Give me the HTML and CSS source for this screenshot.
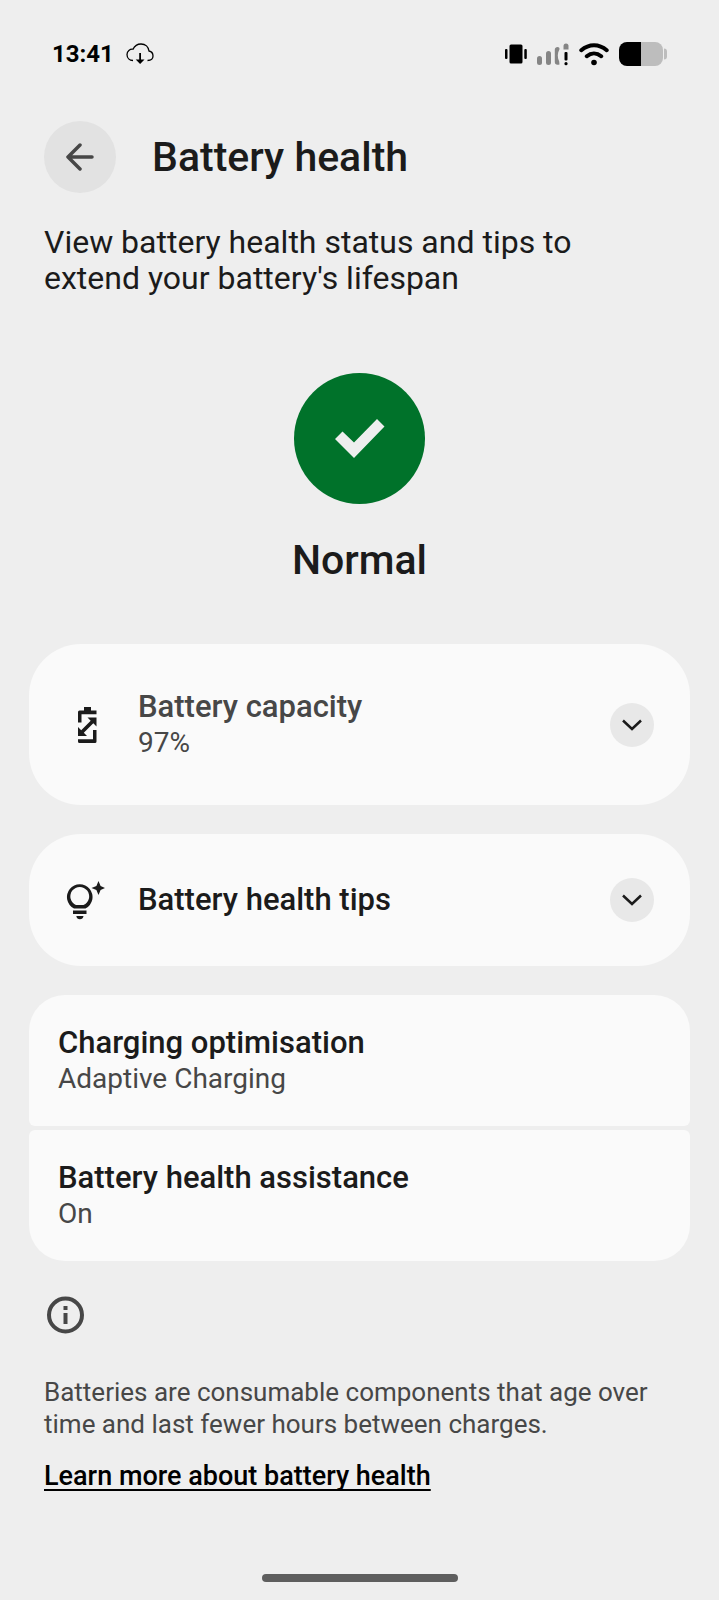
FILE: index.html
```
<!DOCTYPE html>
<html lang="en-GB">
<head>
    <meta charset="UTF-8">
    <meta name="viewport" content="width=device-width, initial-scale=1.0">
    <title>Battery health</title>
    <link rel="stylesheet" href="styles.css">
</head>
<body>

    <!-- Status bar -->
    <div class="status-bar">
        <div class="status-group">
            <span class="time">13:41</span>
            <svg class="cloud" width="28" height="22" viewBox="0 0 28 22" aria-hidden="true">
                <path d="M7 17.500C3.500 17.500 1 15 1 11.500S4 5.800 7 6.200C8.500 3 11.500 1 15 1c4.500 0 7.500 3 8 7 2.500.5 4 2.500 4 5 0 2.700-2 4.500-5.500 4.500" fill="none" stroke="#000" stroke-width="1.300"/>
                <path d="M13.200 10h1.800v6.500h3.500L14.100 21l-4.400-4.500h3.500z"/>
            </svg>
        </div>
        <div class="status-group status-icons">
            <svg width="22" height="24" viewBox="0 0 22 24" aria-hidden="true">
                <rect x="0" y="7" width="2.500" height="10" rx="1"/>
                <rect x="4.500" y="2.500" width="13" height="19" rx="1.500"/>
                <rect x="19.300" y="7" width="2.500" height="10" rx="1"/>
            </svg>
            <svg width="32" height="24" viewBox="0 0 32 24" aria-hidden="true">
                <g fill="#858585">
                    <rect x="0" y="14" width="5" height="9" rx="2.500"/>
                    <rect x="9" y="9" width="5" height="14" rx="2.500"/>
                    <path d="M20.500 5c1.300 0 2.200.8 2 2.200-2.200 3.800-2.200 8.300-.3 12.300l.3 3c-3 .8-4.700 0-4.700-2.500V7.500C17.800 6 19 5 20.500 5z"/>
                    <path d="M26.500 7.500V4a2.500 2.500 0 0 1 5 0v3.500z"/>
                </g>
                <rect x="27.500" y="10" width="3" height="8.500" rx="1"/>
                <circle cx="29" cy="21.700" r="1.600"/>
            </svg>
            <svg width="30" height="24" viewBox="0 0 30 24" aria-hidden="true">
                <path d="M2.300 8.200C10 1.500 20 1.500 27.700 8.200M7.800 14.200c4.300-3.700 10-3.700 14.400 0" fill="none" stroke="#000" stroke-width="4" stroke-linecap="round"/>
                <circle cx="15" cy="20.500" r="2.800"/>
            </svg>
            <svg width="48" height="24" viewBox="0 0 48 24" aria-hidden="true">
                <path d="M22 0h14a8 8 0 0 1 8 8v8a8 8 0 0 1-8 8H22z" fill="#bdbdbd"/>
                <path d="M22 0H8a8 8 0 0 0-8 8v8a8 8 0 0 0 8 8h14z"/>
                <path d="M45 6.500c2 0 3 1 3 3v5c0 2-1 3-3 3z" fill="#bdbdbd"/>
            </svg>
        </div>
    </div>

    <!-- Header -->
    <header class="header">
        <button type="button" class="back" aria-label="Back">
            <svg width="28" height="28" viewBox="0 0 28 28" fill="none" stroke="#474747" stroke-width="3.500" stroke-linecap="round" stroke-linejoin="round" aria-hidden="true">
                <path d="M26 14H2M14 2L2 14l12 12"/>
            </svg>
        </button>
        <h1>Battery health</h1>
    </header>

    <main>
        <p class="intro">View battery health status and tips to extend your battery's lifespan</p>

        <!-- Health status -->
        <section class="status">
            <div class="badge">
                <svg width="50" height="39" viewBox="0 0 50 39" aria-hidden="true">
                    <path d="M0 20l7.500-7.500L19 23.500 42 0l7.500 7.500L19 39z" fill="#eee"/>
                </svg>
            </div>
            <h2>Normal</h2>
        </section>

        <!-- Expandable cards -->
        <section class="card card-tall">
            <div class="card-icon">
                <svg width="40" height="40" viewBox="0 0 40 40" aria-hidden="true">
                    <path d="M13 17.500V7Q13 5.500 14.500 5.500H19V2h7v3.500h5.500V9.200H16.500v8.300z"/>
                    <path d="M22.500 12.500h9v9l-3.200-3.200-9.500 9.500L22 31h-9v-9l3.200 3.200 9.500-9.500z"/>
                    <path d="M31.500 25v11.500q0 1.500-1.500 1.500H14.500Q13 38 13 36.500v-2.200h15V25z"/>
                </svg>
            </div>
            <div class="card-text">
                <h3 class="muted">Battery capacity</h3>
                <p>97%</p>
            </div>
            <button type="button" class="expand" aria-label="Expand battery capacity">
                <svg width="20" height="12" viewBox="0 0 20 12" aria-hidden="true">
                    <path d="M1 1.500l9 8.500 9-8.500"/>
                </svg>
            </button>
        </section>

        <section class="card">
            <div class="card-icon">
                <svg width="40" height="40" viewBox="0 0 40 40" aria-hidden="true">
                    <path d="M9 28.500a12.800 12.800 0 1 1 11.500 0z"/>
                    <path class="bulb-hole" d="M11 25a9.400 9.400 0 1 1 7.500 0z"/>
                    <path d="M8 30.500h13.500v3.500H8zM11.300 36h7.200q-.6 3.200-3.600 3.200T11.300 36z"/>
                    <path d="M33.500 1l2.100 5.100L40 8l-4.400 1.900L33.500 15l-2.100-5.100L26.500 8l4.900-1.900z"/>
                </svg>
            </div>
            <div class="card-text">
                <h3>Battery health tips</h3>
            </div>
            <button type="button" class="expand" aria-label="Expand battery health tips">
                <svg width="20" height="12" viewBox="0 0 20 12" aria-hidden="true">
                    <path d="M1 1.500l9 8.500 9-8.500"/>
                </svg>
            </button>
        </section>

        <!-- Settings list -->
        <nav class="settings">
            <a href="#charging" class="setting">
                <h3>Charging optimisation</h3>
                <p>Adaptive Charging</p>
            </a>
            <a href="#assistance" class="setting">
                <h3>Battery health assistance</h3>
                <p>On</p>
            </a>
        </nav>
    </main>

    <!-- Footer note -->
    <footer class="note">
        <svg width="44" height="44" viewBox="0 0 44 44" aria-hidden="true">
            <circle cx="21.500" cy="22" r="16.500" fill="none" stroke="#474747" stroke-width="4"/>
            <path d="M19.500 20h4v11h-4zM19.500 13h4v4h-4z" fill="#474747"/>
        </svg>
        <p>Batteries are consumable components that age over time and last fewer hours between charges.</p>
        <a href="#learn-more">Learn more about battery health</a>
    </footer>

    <div class="home-bar"></div>

</body>
</html>
```
FILE: styles.css
```
* {
    margin: 0;
    padding: 0;
    box-sizing: border-box;
}

body {
    min-height: 100vh;
    display: flex;
    flex-direction: column;
    font-family: Roboto, sans-serif;
    background-color: #eee;
    color: #1b1b1b;
}

svg {
    display: block;
}

button {
    border: none;
    border-radius: 50%;
    display: flex;
    align-items: center;
    justify-content: center;
    flex-shrink: 0;
    cursor: pointer;
}

/* Status bar */
.status-bar {
    display: flex;
    justify-content: space-between;
    padding: 36px 52px 0;
}

.status-group {
    display: flex;
    align-items: center;
    gap: 12px;
    height: 36px;
    color: #000;
}

.status-icons {
    gap: 10px;
}

.time {
    font-size: 24px;
    font-weight: 700;
}

/* Header */
.header {
    display: flex;
    align-items: center;
    gap: 36px;
    padding: 49px 44px 0;
}

.back {
    width: 72px;
    height: 72px;
    background-color: #e2e2e2;
}

h1,
h2 {
    font-size: 41px;
    line-height: 50px;
    font-weight: 500;
}

.intro {
    padding: 31px 72px 0 44px;
    font-size: 32px;
    line-height: 36px;
}

/* Health status */
.status {
    display: flex;
    flex-direction: column;
    align-items: center;
    gap: 31px;
    padding: 77px 0 59px;
}

.badge {
    width: 131px;
    height: 131px;
    border-radius: 50%;
    background-color: #00722a;
    display: flex;
    align-items: center;
    justify-content: center;
}

/* Cards */
.card {
    display: flex;
    align-items: center;
    min-height: 132px;
    margin: 0 29px 29px;
    padding: 0 36px;
    border-radius: 52px;
    background-color: #fafafa;
}

.card-tall {
    min-height: 161px;
}

.card-icon {
    width: 73px;
    fill: #1b1b1b;
}

.card-icon .bulb-hole {
    fill: #fafafa;
}

.card-text {
    flex: 1;
}

h3 {
    font-size: 31px;
    line-height: 36px;
    font-weight: 500;
}

h3.muted {
    color: #474747;
}

.card p,
.setting p {
    font-size: 28px;
    line-height: 36px;
    color: #474747;
}

.expand {
    width: 44px;
    height: 44px;
    background-color: #e8e8e8;
}

.expand path {
    fill: none;
    stroke: #1b1b1b;
    stroke-width: 2.5;
}

/* Settings list */
.settings {
    display: flex;
    flex-direction: column;
    gap: 4px;
    margin: 0 29px;
    border-radius: 36px;
    overflow: hidden;
}

.setting {
    display: flex;
    flex-direction: column;
    justify-content: center;
    min-height: 131px;
    padding: 0 29px;
    border-radius: 6px;
    background-color: #fafafa;
    color: #1b1b1b;
    text-decoration: none;
}

/* Footer note */
.note {
    padding: 32px 44px;
}

.note p {
    margin: 39px 0 20px;
    font-size: 26px;
    line-height: 32px;
    color: #474747;
}

.note a {
    font-size: 27px;
    line-height: 32px;
    font-weight: 500;
    color: #000;
    text-decoration-thickness: 2px;
    text-decoration-skip-ink: none;
    text-underline-offset: 4px;
}

.home-bar {
    width: 196px;
    height: 8px;
    margin: auto auto 18px;
    border-radius: 4px;
    background-color: #5e5e5e;
}
```
